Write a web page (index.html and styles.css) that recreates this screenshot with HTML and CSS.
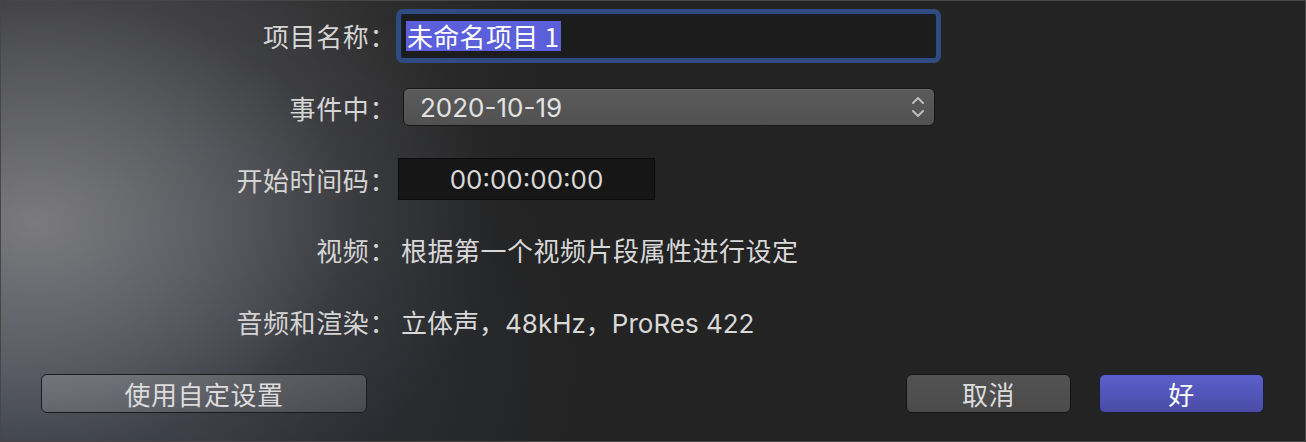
FILE: index.html
```html
<!DOCTYPE html>
<html lang="zh-CN">
<head>
<meta charset="utf-8">
<title>新建项目</title>
<link rel="stylesheet" href="styles.css">
</head>
<body>
<div class="sheet">
  <div class="form">
    <div class="label">项目名称：</div>
    <div class="cell">
      <div class="name-ring">
        <div class="name-field"><span class="sel">未命名项目 1</span></div>
      </div>
    </div>

    <div class="label">事件中：</div>
    <div class="cell">
      <div class="popup">
        <span>2020-10-19</span>
        <svg class="chev" width="14" height="24" viewBox="0 0 14 24">
          <path d="M2 8 L7 3 L12 8" fill="none" stroke="#bdbdbd" stroke-width="2" stroke-linecap="round" stroke-linejoin="round"/>
          <path d="M2 16 L7 21 L12 16" fill="none" stroke="#bdbdbd" stroke-width="2" stroke-linecap="round" stroke-linejoin="round"/>
        </svg>
      </div>
    </div>

    <div class="label">开始时间码：</div>
    <div class="cell">
      <div class="timecode">00:00:00:00</div>
    </div>

    <div class="label">视频：</div>
    <div class="cell"><div class="value">根据第一个视频片段属性进行设定</div></div>

    <div class="label">音频和渲染：</div>
    <div class="cell"><div class="value value-mixed">立体声，48kHz，ProRes 422</div></div>
  </div>

  <div class="footer">
    <button class="btn btn-custom">使用自定设置</button>
    <div class="right-btns">
      <button class="btn btn-cancel">取消</button>
      <button class="btn btn-ok">好</button>
    </div>
  </div>
</div>
</body>
</html>
```

FILE: styles.css
```css
* { box-sizing: border-box; }
html, body {
  margin: 0;
  padding: 0;
  width: 1306px;
  height: 442px;
  overflow: hidden;
}
body {
  font-family: Inter, "Noto Sans CJK SC", sans-serif;
  font-size: 26px;
  color: #d6d6d6;
  background: #232323;
}
.sheet {
  width: 1306px;
  height: 442px;
  border: 1px solid #464646;
  background:
    radial-gradient(ellipse 460px 320px at 35px 222px, rgba(126,126,129,0.95) 0%, rgba(108,108,112,0.75) 35%, rgba(78,78,83,0.35) 70%, rgba(60,60,64,0) 100%),
    radial-gradient(ellipse 580px 390px at 0px 360px, rgba(70,78,96,0.9) 0%, rgba(55,60,72,0.5) 55%, rgba(40,40,44,0) 100%),
    radial-gradient(ellipse 500px 330px at 40px 60px, rgba(76,76,78,0.8) 0%, rgba(40,40,40,0) 100%),
    #232323;
  display: flex;
  flex-direction: column;
}
.form {
  display: grid;
  grid-template-columns: 395px 1fr;
  grid-template-rows: 71px 72px 72px 68px 76px;
  margin-top: -1px;
}
.label {
  display: flex;
  align-items: center;
  justify-content: flex-end;
  color: #d4d4d4;
  white-space: nowrap;
  font-family: "Noto Sans CJK SC", sans-serif;
  letter-spacing: 0.6px;
}
.cell {
  display: flex;
  align-items: center;
}
.name-ring {
  width: 545px;
  height: 54px;
  border: 5px solid #2f4c80;
  border-radius: 7px;
  background: #1a1d28;
  padding: 2px;
}
.name-field {
  height: 100%;
  background: #1c1c1c;
  padding-left: 3px;
  display: flex;
  align-items: center;
}
.sel {
  display: inline-block;
  height: 30px;
  line-height: 30px;
  background: #5b5fd9;
  color: #ffffff;
  padding: 0 2px 0 1px;
  font-family: "Noto Sans CJK SC", sans-serif;
  letter-spacing: 0.3px;
}
.popup {
  margin-left: 7px;
  width: 532px;
  height: 38px;
  border: 1px solid #161616;
  border-radius: 6px;
  background: linear-gradient(#5a5a5a, #515151);
  box-shadow: inset 0 1px 0 rgba(255,255,255,0.08);
  display: flex;
  align-items: center;
  justify-content: space-between;
  padding: 0 9px 0 16px;
  color: #e2e2e2;
}
.chev { display: block; }
.timecode {
  margin-left: 2px;
  width: 257px;
  height: 42px;
  background: #161616;
  border: 1px solid #0b0b0b;
  display: flex;
  align-items: center;
  justify-content: center;
  color: #d8d8d8;
}
.value {
  margin-left: 5px;
  color: #d8d8d8;
  white-space: nowrap;
  letter-spacing: 0.5px;
}
.value-mixed {
  letter-spacing: 0;
}
.footer {
  display: flex;
  justify-content: space-between;
  align-items: center;
  padding: 0 41px 0 40px;
  margin-top: 15px;
}
.right-btns {
  display: flex;
  gap: 28px;
}
.btn {
  font-family: "Noto Sans CJK SC", sans-serif;
  font-size: 26px;
  height: 39px;
  border-radius: 6px;
  border: 1px solid #141414;
  color: #dcdcdc;
  display: flex;
  align-items: center;
  justify-content: center;
  padding: 0;
  line-height: 1;
  letter-spacing: 0.5px;
}
.btn-custom {
  width: 326px;
  background: linear-gradient(rgba(255,255,255,0.17), rgba(255,255,255,0.13));
  border-color: #1a1c20;
}
.btn-cancel {
  width: 165px;
  background: linear-gradient(#525252, #4b4b4b);
}
.btn-ok {
  width: 165px;
  background: linear-gradient(#5b5fcb, #4a4ca6);
  border-color: #1e1e36;
  color: #ffffff;
}
```
